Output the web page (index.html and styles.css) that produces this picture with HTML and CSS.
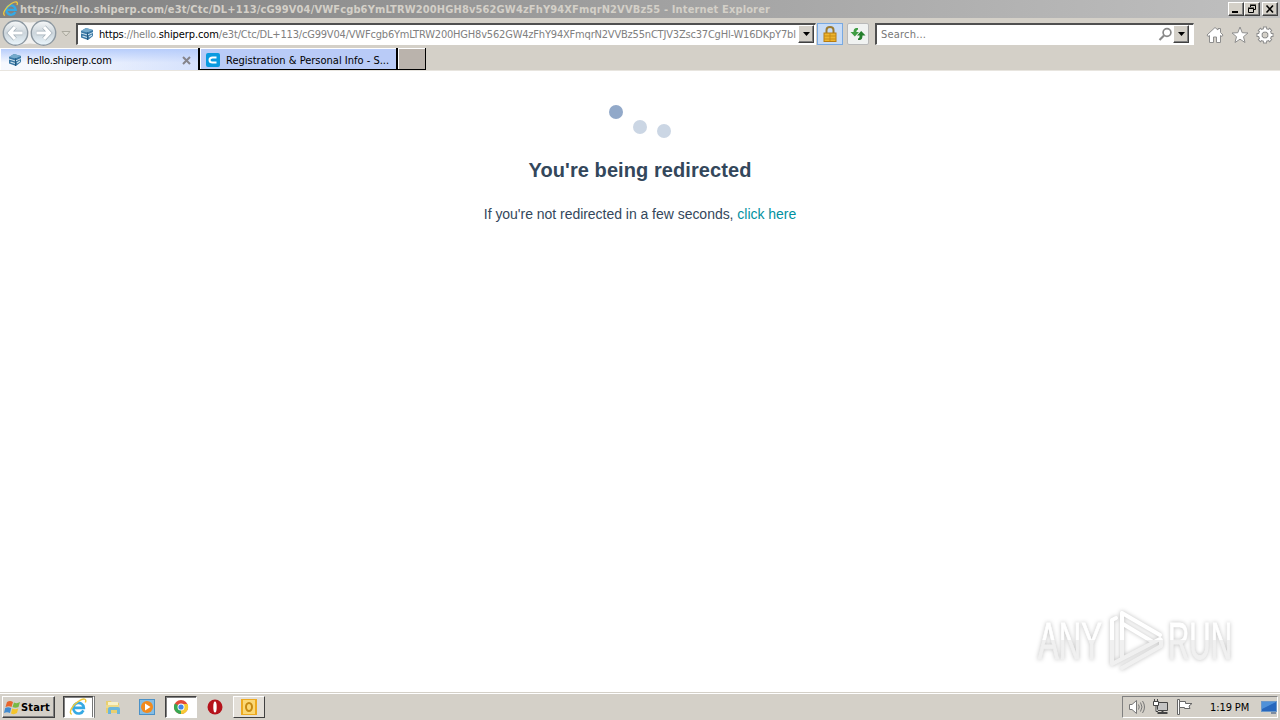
FILE: index.html
```html
<!DOCTYPE html>
<html lang="en">

<head>
    <meta charset="UTF-8">
    <title>hello.shiperp.com</title>
    <link rel="stylesheet" href="styles.css">
</head>

<body>
    <!-- shared symbols -->
    <svg class="symbols" width="0" height="0">
        <symbol id="ie" viewBox="0 0 16 16">
            <path d="M12.800 11A4.700 4.700 0 1 1 13.200 8.800H4.500" fill="none" stroke="#35a9e4" stroke-width="2.300"/>
            <path d="M2.500 14.500C-1 13.500 3 6 9 2.500C13 0 16 .500 14.500 4" fill="none" stroke="#f0c93c" stroke-width="1.300"/>
        </symbol>
        <symbol id="cube" viewBox="0 0 14 14">
            <path d="M1 4L6 1L13 3V9L8 13L1 10.500Z" fill="#3978a5"/>
            <path d="M1 4L6 1L13 3L7.500 5.400Z" fill="#75aacb"/>
            <path d="M1 6L7.500 8L13 5.500" fill="none" stroke="#cfe3ef" stroke-width="1"/>
            <path d="M2.500 9L7 10.500M9 10L12 8" fill="none" stroke="#cfe3ef" stroke-width="1.300"/>
            <path d="M7.500 5.400V13" stroke="#24597f"/>
        </symbol>
        <symbol id="down" viewBox="0 0 7 4">
            <path d="M0 0H7L3.500 4Z"/>
        </symbol>
    </svg>

    <div class="titlebar">
        <svg class="title-icon" width="17" height="16"><use href="#ie"/></svg>
        <span class="title-text">https://hello.shiperp.com/e3t/Ctc/DL+113/cG99V04/VWFcgb6YmLTRW200HGH8v562GW4zFhY94XFmqrN2VVBz55 - Internet Explorer</span>
        <div class="window-buttons">
            <button><svg width="12" height="10"><path d="M2 8H8" stroke="#000" stroke-width="2"/></svg></button>
            <button><svg width="12" height="10"><path d="M4.500 3V1.500H9.500V5.500H8M4 1H10M2.500 4.500H7.500V8.500H2.500ZM2 4H8" fill="none" stroke="#000"/></svg></button>
            <button class="close"><svg width="12" height="10"><path d="M2.500 1.500L9 8.500M9 1.500L2.500 8.500" stroke="#000" stroke-width="1.600"/></svg></button>
        </div>
    </div>

    <div class="navbar">
        <svg class="back-forward" width="56" height="28" viewBox="0 0 56 28">
            <defs>
                <linearGradient id="ball" x2="0" y2="1">
                    <stop offset="0" stop-color="#f7f8f9"/>
                    <stop offset=".5" stop-color="#ccd5db"/>
                    <stop offset="1" stop-color="#eaf6fd"/>
                </linearGradient>
            </defs>
            <path d="M14 1Q28 6 42 1V27Q28 22 14 27Z" fill="#f2f1ef"/>
            <circle cx="13.500" cy="14" r="12.200" fill="url(#ball)" stroke="#8d98a1" stroke-width="1.400"/>
            <circle cx="41.500" cy="14" r="12.200" fill="url(#ball)" stroke="#8d98a1" stroke-width="1.400"/>
            <path d="M13 8L7.500 14L13 20M8 14H20.500" fill="none" stroke="#a3afb8" stroke-width="4.600"/>
            <path d="M42 8L47.500 14L42 20M47 14H34.500" fill="none" stroke="#a3afb8" stroke-width="4.600"/>
            <path d="M13 8L7.500 14L13 20M8 14H20.500" fill="none" stroke="#fff" stroke-width="3.200"/>
            <path d="M42 8L47.500 14L42 20M47 14H34.500" fill="none" stroke="#fff" stroke-width="3.200"/>
        </svg>
        <svg class="history" width="10" height="6"><path d="M1 .5H9L5 5Z" fill="#dedbd2" stroke="#aaa89e"/></svg>
        <div class="field address">
            <svg width="14" height="14"><use href="#cube"/></svg>
            <span class="url"><b>https</b>://hello.<b class="domain">shiperp.com</b>/e3t/Ctc/DL+113/cG99V04/VWFcgb6YmLTRW200HGH8v562GW4zFhY94XFmqrN2VVBz55nCTJV3Zsc37CgHl-W16DKpY7bl</span>
            <button class="drop"><svg width="7" height="4"><use href="#down"/></svg></button>
        </div>
        <div class="tool lock">
            <svg width="16" height="18" viewBox="0 0 16 18">
                <path d="M4.500 9V5Q4.500 2 8 2T11.500 5V9" fill="none" stroke="#9b7b32" stroke-width="2"/>
                <rect x="2" y="8" width="12" height="8.500" fill="#eeb52e" stroke="#b67c12"/>
                <path d="M2 11H14M2 14H14M8 8V16" stroke="#c78b17"/>
            </svg>
        </div>
        <div class="tool refresh">
            <svg width="16" height="16" viewBox="0 0 16 16">
                <path d="M8 2H6Q3.500 2.500 3.500 6H.500L4.800 10.500L9 6H6.300Q6.300 4 8 3.500Z" fill="#3f9d43"/>
                <path d="M8 14H10Q12.500 13.500 12.500 9.500H15.500L11.200 5L7 9.500H9.700Q9.700 12 8 12.500Z" fill="#247f2c"/>
            </svg>
        </div>
        <div class="field search">
            <span>Search...</span>
            <svg width="15" height="15"><circle cx="9" cy="5.500" r="3.900" fill="none" stroke="#888" stroke-width="1.700"/><path d="M6 8.500L1.500 13" stroke="#888" stroke-width="2.200"/></svg>
            <button class="drop"><svg width="7" height="4"><use href="#down"/></svg></button>
        </div>
        <div class="commands">
            <svg width="18" height="18" viewBox="0 0 18 18"><path d="M1 9L9 1.500L12 4V2.500H14.500V6.500L17 9L16 10.500L14.500 9.500V16.500H10.500V11H7.500V16.500H3.500V9.500L2 10.500Z" fill="#fff" stroke="#8e8e8e"/></svg>
            <svg width="18" height="18" viewBox="0 0 18 18"><path d="M9 1L11.200 6.700L17 7L12.500 10.700L14 16.500L9 13.200L4 16.500L5.500 10.700L1 7L6.800 6.700Z" fill="#fff" stroke="#8e8e8e"/></svg>
            <svg width="18" height="18" viewBox="0 0 18 18">
                <g fill="none" stroke="#8e8e8e">
                    <path d="M9 .500V17.500M.500 9H17.500M3 3L15 15M15 3L3 15" stroke-width="4"/>
                    <circle cx="9" cy="9" r="4.800" stroke-width="4.500"/>
                </g>
                <g fill="none" stroke="#fff">
                    <path d="M9 1.500V16.500M1.500 9H16.500M3.700 3.700L14.300 14.300M14.300 3.700L3.700 14.300" stroke-width="2.200"/>
                    <circle cx="9" cy="9" r="4.800" stroke-width="2.600"/>
                </g>
                <circle cx="9" cy="9" r="3" fill="#d4d0c8" stroke="#8e8e8e"/>
            </svg>
        </div>
    </div>

    <div class="tabs">
        <div class="tab active">
            <svg width="14" height="14"><use href="#cube"/></svg>
            <span class="tab-name">hello.shiperp.com</span>
            <svg class="tab-close" width="9" height="9"><path d="M1 1L8 8M8 1L1 8" stroke="#85848b" stroke-width="2"/></svg>
        </div>
        <div class="tab inactive">
            <svg width="16" height="16"><rect x="1" y="1" width="14" height="14" rx="2" fill="#0a9ae0"/><path d="M11.500 5.500H7.500Q4.500 5.500 4.500 8T7.500 10.500H11.500" fill="none" stroke="#fff" stroke-width="2"/></svg>
            <span class="tab-name">Registration &amp; Personal Info - S...</span>
        </div>
        <div class="tab new"></div>
    </div>

    <main class="page">
        <svg class="loader" width="64" height="36">
            <circle cx="8" cy="8" r="7" fill="#92a9c9"/>
            <circle cx="32" cy="23" r="7" fill="#cbd6e4"/>
            <circle cx="56" cy="27" r="7" fill="#cbd6e4"/>
        </svg>
        <h1>You're being redirected</h1>
        <p>If you're not redirected in a few seconds, <a href="#">click here</a></p>
        <svg class="watermark" width="216" height="76" viewBox="0 0 216 76">
            <defs>
                <linearGradient id="mark" x1="0" y1="0" x2="0" y2="76" gradientUnits="userSpaceOnUse">
                    <stop offset=".48" stop-color="#fff"/>
                    <stop offset=".48" stop-color="#f0f0f0"/>
                </linearGradient>
            </defs>
            <g fill="url(#mark)" stroke="url(#mark)" stroke-width=".8">
                <text x="6" y="55" textLength="64" lengthAdjust="spacingAndGlyphs">ANY</text>
                <text x="136" y="55" textLength="64" lengthAdjust="spacingAndGlyphs">RUN</text>
            </g>
            <g fill="none" stroke="url(#mark)" stroke-width="4" stroke-linejoin="round" stroke-linecap="round">
                <path d="M128 31L90 9V54"/>
                <path d="M84 14L80 16V60L128 35"/>
                <path d="M90 64L129 42V36"/>
                <path d="M91 20L121 38"/>
            </g>
        </svg>
    </main>

    <div class="taskbar">
        <button class="start">
            <svg width="17" height="17" viewBox="0 0 17 17">
                <path d="M3 3Q6 1 9 3L7.500 8Q5 6.500 1.500 8Z" fill="#e8652b"/>
                <path d="M10 3.500Q13 5 16 3L14.500 8Q11.500 9.500 8.500 8Z" fill="#77b944"/>
                <path d="M1.200 9Q4 7.500 7.200 9L6 14Q3 12.500 0 14Z" fill="#418bd0"/>
                <path d="M8.200 9.500Q11 11 14.200 9.500L13 14Q10 16 7 14.500Z" fill="#f4c52c"/>
            </svg>
            Start
        </button>
        <div class="apps">
            <div class="app open stacked"><svg width="18" height="18"><use href="#ie"/></svg></div>
            <div class="app">
                <svg width="18" height="18" viewBox="0 0 18 18"><path d="M2 3H7L8 5H15V15H2Z" fill="#e8cf70"/><path d="M4 4H14V8H4Z" fill="#f8f1c8"/><path d="M2 7H15V10H2Z" fill="#edda8a"/><path d="M4 16V11Q4 9 6 9H14Q16 9 16 11V16H13V12H7V16Z" fill="#6bb6dc"/></svg>
            </div>
            <div class="app">
                <svg width="18" height="18" viewBox="0 0 18 18"><rect x="1.500" y="1.500" width="15" height="15" fill="#85bde4" stroke="#4b91c7"/><circle cx="9" cy="9" r="6" fill="#f28a1d"/><path d="M7 5.500L12.500 9L7 12.500Z" fill="#fff"/></svg>
            </div>
            <div class="app open">
                <svg width="16" height="16" viewBox="0 0 16 16"><circle cx="8" cy="8" r="7" fill="#e24a37"/><path d="M8 8L1.900 4.500A7 7 0 0 0 8 15L11 9.500Z" fill="#37a852"/><path d="M8 8L8 15A7 7 0 0 0 14.500 5H8Z" fill="#f7ca34"/><circle cx="8" cy="8" r="3.500" fill="#fff"/><circle cx="8" cy="8" r="2.600" fill="#4285e8"/></svg>
            </div>
            <div class="app">
                <svg width="16" height="16" viewBox="0 0 16 16"><circle cx="8" cy="8" r="7.500" fill="#b5121b"/><ellipse cx="8" cy="8" rx="1.700" ry="5.500" fill="#fff"/></svg>
            </div>
            <div class="app raised">
                <svg width="18" height="18" viewBox="0 0 18 18"><rect x="1" y="1" width="16" height="16" fill="#edaa20"/><rect x="3" y="2" width="12" height="14" fill="#fbd875"/><ellipse cx="9" cy="9" rx="3" ry="4" fill="none" stroke="#c68a13" stroke-width="2"/></svg>
            </div>
        </div>
        <div class="tray">
            <svg width="18" height="16" viewBox="0 0 18 16"><path d="M1.500 5.500H4L8.500 1.500V14.500L4 10.500H1.500Z" fill="#fff" stroke="#777"/><path d="M10.500 5.500Q12 8 10.500 10.500M12.500 3.500Q15.500 8 12.500 12.500M14.500 2Q18.500 8 14.500 14" fill="none" stroke="#777"/></svg>
            <svg width="18" height="16" viewBox="0 0 18 16"><path d="M5.500 3.500H15.500V11.500H5.500Z" fill="#c4c4c4" stroke="#444"/><path d="M5.500 14H15.500M10.500 12V14" stroke="#444" stroke-width="2"/><path d="M1.500 2.500H6.500V6.500H1.500ZM4 7V12.500H6M2.500 0V3M5.500 0V3" fill="#fff" stroke="#444"/></svg>
            <svg width="18" height="16" viewBox="0 0 18 16"><path d="M1.500 .500H3.500V15.500H1.500Z" fill="#fff" stroke="#666"/><path d="M3.500 2.500H9.500V4.500H16L13 7L14 9.500H8.500V8.500H3.500Z" fill="#fff" stroke="#666"/></svg>
            <span class="clock">1:19 PM</span>
            <svg width="16" height="14" viewBox="0 0 16 14"><rect x=".500" y="1.500" width="15" height="10" fill="#2767bd" stroke="#6c98c9"/><path d="M1 2H15L1 9Z" fill="#4f91d9"/><path d="M10 13H15" stroke="#294b7b"/></svg>
        </div>
    </div>
</body>

</html>
```
FILE: styles.css
```css
* {
    box-sizing: border-box;
}

body {
    margin: 0;
    height: 720px;
    display: flex;
    flex-direction: column;
    overflow: hidden;
    background: #d4d0c8;
    color: #000;
    font-family: "DejaVu Sans Condensed", "DejaVu Sans", Tahoma, sans-serif;
    font-size: 11px;
}

svg {
    display: block;
    flex-shrink: 0;
}

.symbols {
    position: absolute;
}

button {
    display: flex;
    align-items: center;
    justify-content: center;
    flex-shrink: 0;
    padding: 0;
    border: 1px solid;
    border-color: #fff #404040 #404040 #fff;
    box-shadow: inset -1px -1px #808080;
    background: #d4d0c8;
    font: inherit;
}

.titlebar {
    height: 18px;
    display: flex;
    align-items: center;
    padding: 0 2px;
    background: linear-gradient(90deg, #808080, #c0c0c0);
}

.title-text {
    flex: 1;
    margin-left: 1px;
    color: #d4d0c8;
    font-weight: bold;
    letter-spacing: 0.14px;
    white-space: nowrap;
}

.window-buttons {
    display: flex;
}

.window-buttons button {
    width: 16px;
    height: 14px;
}

.window-buttons .close {
    margin-left: 2px;
}

.navbar {
    height: 30px;
    display: flex;
    align-items: center;
    padding-left: 2px;
}

.history {
    margin: 1px 5px 0 3px;
}

.field {
    height: 22px;
    display: flex;
    align-items: center;
    flex-shrink: 0;
    margin-top: 1px;
    border: solid;
    border-width: 2px 1px 1px 2px;
    border-color: #505050 #fff #fff #505050;
    background: #fff;
}

.address {
    width: 740px;
    padding: 0 1px 0 2px;
}

.url {
    flex: 1;
    margin-left: 5px;
    overflow: hidden;
    color: #808080;
    letter-spacing: -0.19px;
    white-space: nowrap;
}

.url b {
    color: #000;
    font-weight: normal;
}

.url .domain {
    letter-spacing: -0.1px;
}

.drop {
    width: 16px;
    height: 18px;
}

.tool {
    height: 22px;
    display: flex;
    align-items: center;
    justify-content: center;
    margin-top: 1px;
    border: 1px solid;
}

.lock {
    width: 26px;
    margin-left: 1px;
    border-color: #78a9e2;
    background: #c8dcf6;
}

.refresh {
    width: 22px;
    margin-left: 4px;
    border-color: #b9b9b9;
    border-radius: 2px;
    background: #f0f2f1;
}

.search {
    width: 319px;
    margin-left: 6px;
    padding: 0 4px 0 4px;
    color: #777;
    letter-spacing: 0.2px;
}

.search span {
    flex: 1;
}

.commands {
    display: flex;
    gap: 7px;
    margin: 4px 0 0 12px;
}

.tabs {
    height: 23px;
    display: flex;
    border-bottom: 1px solid #e8e5df;
}

.tab {
    height: 22px;
    display: flex;
    align-items: center;
    white-space: nowrap;
}

.tab-name {
    flex: 1;
    margin-left: 5px;
}

.active {
    width: 198px;
    padding: 1px 7px 0 7px;
    border-left: 1px solid #fff;
    border-top: 1px solid #fff;
    background: linear-gradient(#b7cdfb, rgba(247, 249, 254, 0.6) 65%), linear-gradient(90deg, #f4f7fe 20%, #a3befa);
    letter-spacing: -0.2px;
}

.inactive {
    width: 200px;
    padding: 3px 5px 0 5px;
    border: 1px solid #000;
    border-width: 0 2px 1px 2px;
    box-shadow: inset 1px 1px #fff;
    background: #b9cbf7;
}

.new {
    width: 28px;
    border: 1px solid #000;
    border-width: 0 1px 1px 0;
    box-shadow: inset 1px 1px #fff;
    background: #bab3ac;
}

.page {
    position: relative;
    flex: 1;
    display: flex;
    flex-direction: column;
    align-items: center;
    padding-top: 33px;
    background: #fff;
    color: #33475b;
    font-family: "Liberation Sans", Arial, sans-serif;
}

.page h1 {
    margin: 18px 0 0;
    font-size: 20px;
    line-height: 25px;
    letter-spacing: 0.08px;
}

.page p {
    margin: 23px 0 0;
    font-size: 14px;
    line-height: 17px;
    letter-spacing: -0.03px;
}

.page a {
    color: #0091a0;
    text-decoration: none;
}

.watermark {
    position: absolute;
    right: 32px;
    bottom: 12px;
    overflow: visible;
    filter: drop-shadow(0 0 2px rgba(0, 0, 0, 0.25));
    font-family: "Liberation Sans Narrow", "Liberation Sans", sans-serif;
    font-size: 51px;
}

.taskbar {
    height: 28px;
    display: flex;
    align-items: center;
    padding: 1px 2px 0;
    border-top: 1px solid #d4d0c8;
    box-shadow: inset 0 1px #fff;
}

.start {
    width: 53px;
    height: 22px;
    justify-content: flex-start;
    padding-left: 1px;
    font-weight: bold;
    letter-spacing: 0.15px;
}

.apps {
    display: flex;
    flex: 1;
    margin-left: 8px;
    gap: 2px;
}

.app {
    width: 32px;
    height: 22px;
    display: flex;
    align-items: center;
    justify-content: center;
    border: 1px solid transparent;
}

.open {
    background: #fff;
    border-color: #404040 #fff #fff #404040;
    box-shadow: inset 1px 1px #808080;
}

.stacked {
    border-right: 3px double #777;
}

.raised {
    border-color: #fff #404040 #404040 #fff;
    background: #e3dfd8;
}

.tray {
    width: 156px;
    height: 22px;
    display: flex;
    align-items: center;
    gap: 6px;
    padding-left: 5px;
    border: 1px solid;
    border-color: #808080 #fff #fff #808080;
}

.clock {
    width: 45px;
    margin-left: 10px;
    letter-spacing: -0.1px;
    white-space: nowrap;
}
```
